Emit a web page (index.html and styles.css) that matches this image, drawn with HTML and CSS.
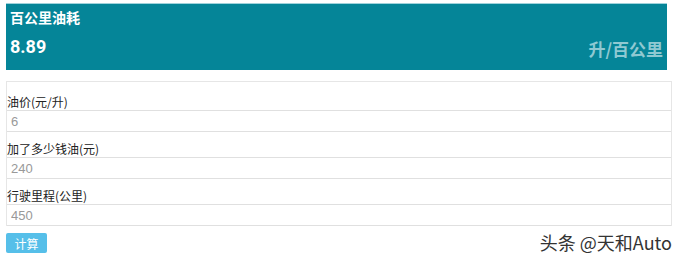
FILE: index.html
```html
<!DOCTYPE html>
<html lang="zh-CN">
  <head>
    <meta charset="UTF-8" />
    <title>油耗计算</title>
    <link rel="stylesheet" href="styles.css">
  </head>
  <body>
    <div class="result">
      <h3 class="result-title">百公里油耗</h3>
      <div class="result-row">
        <span class="result-value">8.89</span>
        <span class="result-unit">升/百公里</span>
      </div>
    </div>

    <form class="calc">
      <div class="field">
        <label for="price">油价(元/升)</label>
        <input type="text" id="price" value="6" />
      </div>
      <div class="field">
        <label for="money">加了多少钱油(元)</label>
        <input type="text" id="money" value="240" />
      </div>
      <div class="field">
        <label for="distance">行驶里程(公里)</label>
        <input type="text" id="distance" value="450" />
      </div>
    </form>

    <div class="footer">
      <button class="submit" type="button">计算</button>
      <span class="mark">头条 @天和Auto</span>
    </div>
  </body>
</html>
```

FILE: styles.css
```css
body {
  margin: 0;
  padding: 3px 8px 0 6px;
  font-family: "Noto Sans CJK SC", "Liberation Sans", sans-serif;
  background: #fff;
}

.result {
  width: 661px;
  height: 67px;
  box-sizing: border-box;
  background-color: #058598;
  border-top: 1px solid #9fd3dc;
  padding: 2px 4px 0 4px;
  color: #fff;
}

.result-title {
  margin: 0;
  font-size: 14px;
  line-height: 22px;
  font-weight: bold;
}

.result-row {
  display: flex;
  justify-content: space-between;
  align-items: center;
  margin-top: 4px;
}

.result-value {
  font-family: Roboto, "Liberation Sans", sans-serif;
  font-size: 18px;
  font-weight: bold;
}

.result-unit {
  font-size: 17px;
  font-weight: bold;
  color: #8fc9d2;
  margin-top: 4px;
}

.calc {
  margin-top: 11px;
  width: 666px;
  border: 1px solid #e6e6e6;
  border-bottom: none;
  box-sizing: border-box;
}

.field label {
  display: block;
  font-size: 12px;
  line-height: 16px;
  padding: 9px 0 0 0;
  color: #222;
}

.field:first-child label {
  padding-top: 12px;
}

.field input {
  display: block;
  width: 100%;
  height: 22px;
  box-sizing: border-box;
  margin: 0;
  border: none;
  border-top: 1px solid #e0e0e0;
  border-bottom: 1px solid #e0e0e0;
  padding: 0 4px;
  font-family: "Liberation Sans", sans-serif;
  font-size: 13px;
  color: #999;
  outline: none;
}

.footer {
  display: flex;
  justify-content: space-between;
  align-items: flex-start;
  margin-top: 7px;
  width: 666px;
}

.submit {
  width: 41px;
  height: 20px;
  border: none;
  border-radius: 2px;
  background-color: #56bfe9;
  color: #fff;
  font-family: "Noto Sans CJK SC", sans-serif;
  font-size: 12px;
  padding: 0;
  cursor: pointer;
}

.mark {
  font-size: 18px;
  line-height: 18px;
  color: #333;
  text-shadow: 1px 1px 0 #fff, -1px -1px 0 #fff;
}
```
